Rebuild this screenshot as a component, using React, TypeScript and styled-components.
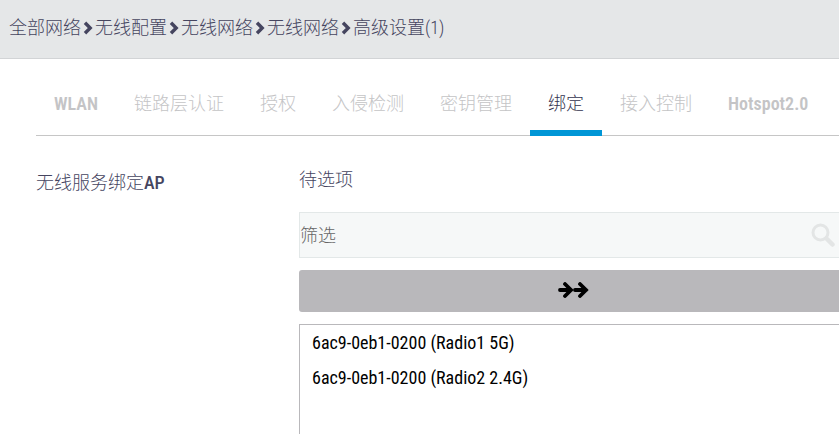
import React, { useState } from "react";
import styled, { createGlobalStyle } from "styled-components";

const GlobalStyle = createGlobalStyle`
  html {
    overflow-x: hidden;
    scrollbar-width: none;
  }
  body {
    margin: 0;
    background: #fff;
    color: #45455f;
    font: 300 18px/24px "Roboto Condensed", "Noto Sans CJK SC", sans-serif;
  }
  *, *::before, *::after { box-sizing: border-box; }
`;

const Breadcrumb = styled.nav`
  display: flex;
  align-items: center;
  height: 59px;
  padding: 0 9px 2px;
  background: #e5e7e8;
  border-bottom: 1px solid #d2d4d6;
`;

const Crumb = styled.a`
  color: inherit;
  text-decoration: none;
  white-space: nowrap;
`;

const ChevronIcon = styled.svg`
  flex: none;
  width: 10px;
  height: 14px;
  margin: 0 2px;
`;

const Content = styled.main`
  margin-right: -8px;
  padding: 12px 0 0 36px;
`;

const TabBar = styled.div`
  display: flex;
  height: 65px;
  border-bottom: 1px solid #c6c6c6;
`;

const Tab = styled.button<{ $latin?: boolean }>`
  flex: none;
  height: 65px;
  padding: 6px 18px 0;
  border: 0;
  border-bottom: 6px solid transparent;
  background: none;
  color: #c4c4c6;
  font: inherit;
  font-weight: ${(p) => (p.$latin ? 600 : 300)};
  white-space: nowrap;
  cursor: pointer;

  &[aria-selected="true"] {
    border-bottom-color: #0096d6;
    color: #33334f;
  }
`;

const FormRow = styled.section`
  display: grid;
  grid-template-columns: 263px minmax(0, 1fr);
  padding-top: 32px;
`;

const RowLabel = styled.h2`
  margin: 0;
  padding-top: 3px;
  font: inherit;
`;

const LatinWord = styled.span`
  font-weight: 500;
`;

const Picker = styled.div`
  display: flex;
  flex-direction: column;
  gap: 12px;
`;

const PickerLabel = styled.label`
  margin-bottom: 8px;
`;

const SearchBox = styled.div`
  display: flex;
  align-items: center;
  height: 46px;
  padding-right: 11px;
  background: #f6f8f8;
  border: 1px solid #e3e8e8;
`;

const SearchInput = styled.input`
  flex: 1;
  min-width: 0;
  height: 44px;
  padding: 0;
  border: 0;
  outline: 0;
  background: none;
  color: #45455f;
  font: inherit;

  &::placeholder { color: #666; opacity: 1; }
`;

const SearchIcon = styled.svg`
  flex: none;
  width: 24px;
  height: 24px;
`;

const MoveAllButton = styled.button`
  display: flex;
  align-items: center;
  justify-content: center;
  height: 42px;
  padding: 0 0 2px;
  border: 0;
  border-radius: 3px;
  background: #b9b8bb;
  color: #000;
  cursor: pointer;
`;

const ArrowsIcon = styled.svg`
  width: 31px;
  height: 16px;
`;

const OptionList = styled.select`
  height: 180px;
  padding: 0;
  border: 1px solid #b9b8bb;
  border-radius: 0;
  outline: 0;
  background: #fff;
  color: #000;
  font: 500 18px "Roboto Condensed", sans-serif;
  scrollbar-width: none;
`;

const RadioOption = styled.option`
  height: 35px;
  padding: 7px 12px;
`;

const crumbs = ["全部网络", "无线配置", "无线网络", "无线网络", "高级设置(1)"];

const tabs = [
  { label: "WLAN", latin: true },
  { label: "链路层认证" },
  { label: "授权" },
  { label: "入侵检测" },
  { label: "密钥管理" },
  { label: "绑定" },
  { label: "接入控制" },
  { label: "Hotspot2.0", latin: true },
];

const radios = ["6ac9-0eb1-0200 (Radio1 5G)", "6ac9-0eb1-0200 (Radio2 2.4G)"];

function Chevron() {
  return (
    <ChevronIcon viewBox="0 0 10 14" aria-hidden="true">
      <path
        d="M2 1.7 7.2 7 2 12.3"
        fill="none"
        stroke="currentColor"
        strokeWidth="3.4"
      />
    </ChevronIcon>
  );
}

export default function App() {
  const [active, setActive] = useState("绑定");
  const [filter, setFilter] = useState("");

  return (
    <>
      <GlobalStyle />
      <Breadcrumb aria-label="面包屑">
        {crumbs.map((name, i) => (
          <React.Fragment key={i}>
            {i > 0 && <Chevron />}
            <Crumb href="#">{name}</Crumb>
          </React.Fragment>
        ))}
      </Breadcrumb>
      <Content>
        <TabBar role="tablist">
          {tabs.map((tab) => (
            <Tab
              key={tab.label}
              type="button"
              role="tab"
              $latin={tab.latin}
              aria-selected={tab.label === active}
              onClick={() => setActive(tab.label)}
            >
              {tab.label}
            </Tab>
          ))}
        </TabBar>
        <FormRow>
          <RowLabel>
            无线服务绑定<LatinWord>AP</LatinWord>
          </RowLabel>
          <Picker>
            <PickerLabel htmlFor="candidates">待选项</PickerLabel>
            <SearchBox>
              <SearchInput
                type="text"
                placeholder="筛选"
                aria-label="筛选"
                value={filter}
                onChange={(e) => setFilter(e.target.value)}
              />
              <SearchIcon viewBox="0 0 24 24" fill="none" stroke="#e3e5e5" aria-hidden="true">
                <circle cx="9.5" cy="9.5" r="7.5" strokeWidth="3" />
                <path d="m15.5 15.5 6 6" strokeWidth="4.5" strokeLinecap="round" />
              </SearchIcon>
            </SearchBox>
            <MoveAllButton type="button" aria-label="全部添加">
              <ArrowsIcon
                viewBox="0 0 31 16"
                fill="none"
                stroke="currentColor"
                strokeWidth="3.8"
                strokeLinecap="round"
                strokeLinejoin="miter"
                aria-hidden="true"
              >
                <path d="M2 8h11M7 2l6 6-6 6" />
                <path d="M17 8h11M22 2l6 6-6 6" />
              </ArrowsIcon>
            </MoveAllButton>
            <OptionList id="candidates" multiple size={5}>
              {radios
                .filter((name) => name.includes(filter))
                .map((name) => (
                  <RadioOption key={name}>{name}</RadioOption>
                ))}
            </OptionList>
          </Picker>
        </FormRow>
      </Content>
    </>
  );
}
